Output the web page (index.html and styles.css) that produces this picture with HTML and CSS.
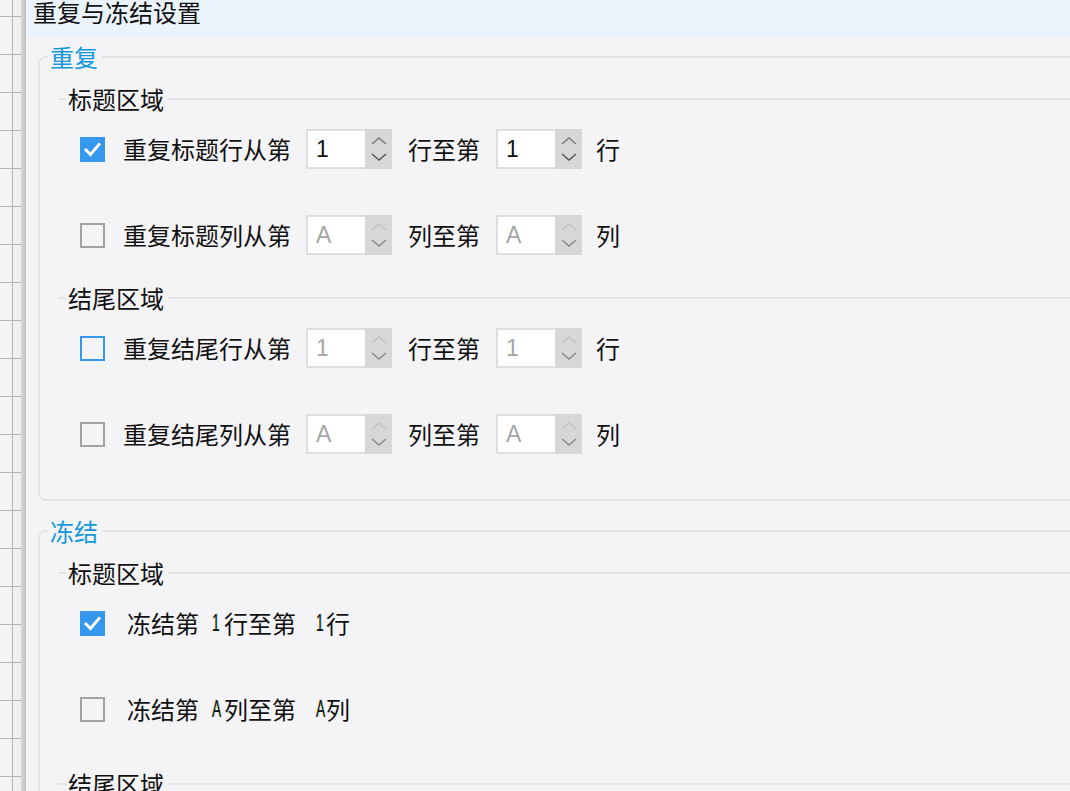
FILE: index.html
```html
<!DOCTYPE html>
<html lang="zh-CN">
<head>
<meta charset="utf-8">
<title>重复与冻结设置</title>
<link rel="stylesheet" href="styles.css">
</head>
<body>
<div class="app">
  <aside class="sheet-strip"></aside>
  <main class="dialog">
    <header class="dialog-title">重复与冻结设置</header>
    <div class="dialog-body">
      <fieldset class="group">
        <legend class="group-title">重复</legend>
        <div class="section-head"><span class="section-text">标题区域</span></div>
        <div class="row row-first">
          <span class="check is-checked"><svg viewBox="0 0 25 25" width="25" height="25"><path d="M6 13 L10.5 17.5 L19 7.5" fill="none" stroke="#fff" stroke-width="3" stroke-linecap="square"/></svg></span>
          <span class="label">重复标题行从第</span>
          <span class="spin"><span class="spin-value">1</span><span class="spin-btns"><svg class="chev-up" viewBox="0 0 16 8" width="16" height="8"><path d="M1 7 L8 1 L15 7"/></svg><svg class="chev-down" viewBox="0 0 16 8" width="16" height="8"><path d="M1 1 L8 7 L15 1"/></svg></span></span>
          <span class="label">行至第</span>
          <span class="spin"><span class="spin-value">1</span><span class="spin-btns"><svg class="chev-up" viewBox="0 0 16 8" width="16" height="8"><path d="M1 7 L8 1 L15 7"/></svg><svg class="chev-down" viewBox="0 0 16 8" width="16" height="8"><path d="M1 1 L8 7 L15 1"/></svg></span></span>
          <span class="label">行</span>
        </div>
        <div class="row row-next">
          <span class="check"></span>
          <span class="label">重复标题列从第</span>
          <span class="spin is-disabled"><span class="spin-value">A</span><span class="spin-btns"><svg class="chev-up" viewBox="0 0 16 8" width="16" height="8"><path d="M1 7 L8 1 L15 7"/></svg><svg class="chev-down" viewBox="0 0 16 8" width="16" height="8"><path d="M1 1 L8 7 L15 1"/></svg></span></span>
          <span class="label">列至第</span>
          <span class="spin is-disabled"><span class="spin-value">A</span><span class="spin-btns"><svg class="chev-up" viewBox="0 0 16 8" width="16" height="8"><path d="M1 7 L8 1 L15 7"/></svg><svg class="chev-down" viewBox="0 0 16 8" width="16" height="8"><path d="M1 1 L8 7 L15 1"/></svg></span></span>
          <span class="label">列</span>
        </div>
        <div class="section-head section-later"><span class="section-text">结尾区域</span></div>
        <div class="row row-first">
          <span class="check is-focused"></span>
          <span class="label">重复结尾行从第</span>
          <span class="spin is-disabled"><span class="spin-value">1</span><span class="spin-btns"><svg class="chev-up" viewBox="0 0 16 8" width="16" height="8"><path d="M1 7 L8 1 L15 7"/></svg><svg class="chev-down" viewBox="0 0 16 8" width="16" height="8"><path d="M1 1 L8 7 L15 1"/></svg></span></span>
          <span class="label">行至第</span>
          <span class="spin is-disabled"><span class="spin-value">1</span><span class="spin-btns"><svg class="chev-up" viewBox="0 0 16 8" width="16" height="8"><path d="M1 7 L8 1 L15 7"/></svg><svg class="chev-down" viewBox="0 0 16 8" width="16" height="8"><path d="M1 1 L8 7 L15 1"/></svg></span></span>
          <span class="label">行</span>
        </div>
        <div class="row row-next">
          <span class="check"></span>
          <span class="label">重复结尾列从第</span>
          <span class="spin is-disabled"><span class="spin-value">A</span><span class="spin-btns"><svg class="chev-up" viewBox="0 0 16 8" width="16" height="8"><path d="M1 7 L8 1 L15 7"/></svg><svg class="chev-down" viewBox="0 0 16 8" width="16" height="8"><path d="M1 1 L8 7 L15 1"/></svg></span></span>
          <span class="label">列至第</span>
          <span class="spin is-disabled"><span class="spin-value">A</span><span class="spin-btns"><svg class="chev-up" viewBox="0 0 16 8" width="16" height="8"><path d="M1 7 L8 1 L15 7"/></svg><svg class="chev-down" viewBox="0 0 16 8" width="16" height="8"><path d="M1 1 L8 7 L15 1"/></svg></span></span>
          <span class="label">列</span>
        </div>
      </fieldset>

      <fieldset class="group group-freeze">
        <legend class="group-title">冻结</legend>
        <div class="section-head"><span class="section-text">标题区域</span></div>
        <div class="row row-first">
          <span class="check is-checked"><svg viewBox="0 0 25 25" width="25" height="25"><path d="M6 13 L10.5 17.5 L19 7.5" fill="none" stroke="#fff" stroke-width="3" stroke-linecap="square"/></svg></span>
          <span class="label label-freeze">冻结第</span>
          <span class="mini">1</span><span class="label">行至第</span>
          <span class="mini mini-second">1</span><span class="label">行</span>
        </div>
        <div class="row row-next">
          <span class="check"></span>
          <span class="label label-freeze">冻结第</span>
          <span class="mini">A</span><span class="label">列至第</span>
          <span class="mini mini-second">A</span><span class="label">列</span>
        </div>
        <div class="section-head section-tail"><span class="section-text">结尾区域</span></div>
      </fieldset>
    </div>
  </main>
</div>
</body>
</html>
```

FILE: styles.css
```css
* { box-sizing: border-box; }

html, body {
  margin: 0;
  height: 100%;
  overflow: hidden;
}

body {
  font-family: "Noto Sans CJK SC", "Noto Sans", sans-serif;
  color: #111;
  background: #f4f4f6;
}

.app {
  display: flex;
  height: 100vh;
}

.sheet-strip {
  flex: none;
  width: 26px;
  background:
    linear-gradient(to right, transparent 21px, #dadada 21px, #c6c6c6 25px, #b9b9b9 26px),
    linear-gradient(to right, transparent 12px, #b4b4b4 12px, #b4b4b4 13px, transparent 13px),
    repeating-linear-gradient(to bottom, transparent 0, transparent 16px, #b4b4b4 16px, #b4b4b4 17px, transparent 17px, transparent 38px),
    linear-gradient(to right, #f6f6f6, #ececec);
}

.dialog {
  flex: 1;
  min-width: 0;
  display: flex;
  flex-direction: column;
  overflow: hidden;
}

.dialog-title {
  flex: none;
  height: 38px;
  padding-left: 7px;
  background: #eaf3fb;
  font-size: 24px;
  line-height: 24px;
}

.dialog-body {
  flex: 1;
  padding: 7px 0 0 12px;
  overflow: hidden;
}

.group {
  margin: 0 -40px 0 0;
  padding: 0 0 45px 0;
  border: 2px solid #e4e4e7;
  border-radius: 8px;
  min-width: 0;
}

.group-freeze {
  margin-top: 18px;
}

.group-title {
  margin-left: 8px;
  padding: 0 4px 0 2px;
  font-size: 24px;
  line-height: 24px;
  color: #1597dc;
}

.section-head {
  display: flex;
  align-items: center;
  height: 24px;
  margin-top: 18px;
  padding-left: 18px;
  font-size: 24px;
  line-height: 24px;
}

.section-head::before {
  content: "";
  width: 8px;
  height: 2px;
  background: #e4e4e7;
}

.section-head::after {
  content: "";
  flex: 1;
  height: 2px;
  background: #e4e4e7;
}

.section-text {
  padding: 0 4px 0 2px;
}

.section-later { margin-top: 31px; }
.section-tail { margin-top: 43px; }

.row {
  display: flex;
  align-items: center;
  height: 40px;
  padding-left: 40px;
  font-size: 24px;
  line-height: 24px;
}

.row-first { margin-top: 18px; }
.row-next { margin-top: 46px; }

.check {
  flex: none;
  width: 25px;
  height: 25px;
  border: 2px solid #a2a2a2;
  margin-right: 18px;
  display: flex;
}

.check svg { display: block; margin: -2px; }

.check.is-checked {
  border-color: #3597ee;
  background: #3597ee;
}

.check.is-focused {
  border-color: #3597ee;
}

.label { white-space: nowrap; }

.label-freeze { margin-left: 4px; }

.spin {
  flex: none;
  display: flex;
  width: 86px;
  height: 40px;
  margin: 0 16px 0 15px;
  border: 2px solid #dedee1;
  background: #fff;
}

.spin + .label + .spin { margin-left: 16px; margin-right: 14px; }

.spin-value {
  flex: 1;
  padding-left: 8px;
  font-family: "Liberation Sans", Arial, sans-serif;
  font-size: 23px;
  line-height: 36px;
  color: #111;
}

.spin-btns {
  flex: none;
  width: 27px;
  margin: -2px -2px -2px 0;
  background: #d7d7da;
  display: flex;
  flex-direction: column;
  align-items: center;
  justify-content: space-around;
  padding: 4px 0;
}

.spin-btns svg { display: block; }
.spin-btns path { fill: none; stroke-width: 1.5; }
.chev-up path { stroke: #7a7a7a; }
.chev-down path { stroke: #555; }

.spin.is-disabled .spin-value { color: #a6a6a6; }
.spin.is-disabled .chev-up path { stroke: #c2c2c2; }
.spin.is-disabled .chev-down path { stroke: #8a8a8a; }

.mini {
  flex: none;
  display: inline-block;
  width: 12px;
  margin-left: 13px;
  font-family: "Liberation Sans", Arial, sans-serif;
  font-size: 23px;
  color: #111;
  transform: scaleX(0.6);
  transform-origin: left center;
  text-shadow: -1px 0 rgba(220, 170, 0, 0.55), 1px 0 rgba(0, 200, 255, 0.5);
}

.mini-second { margin-left: 20px; width: 10px; }
```
